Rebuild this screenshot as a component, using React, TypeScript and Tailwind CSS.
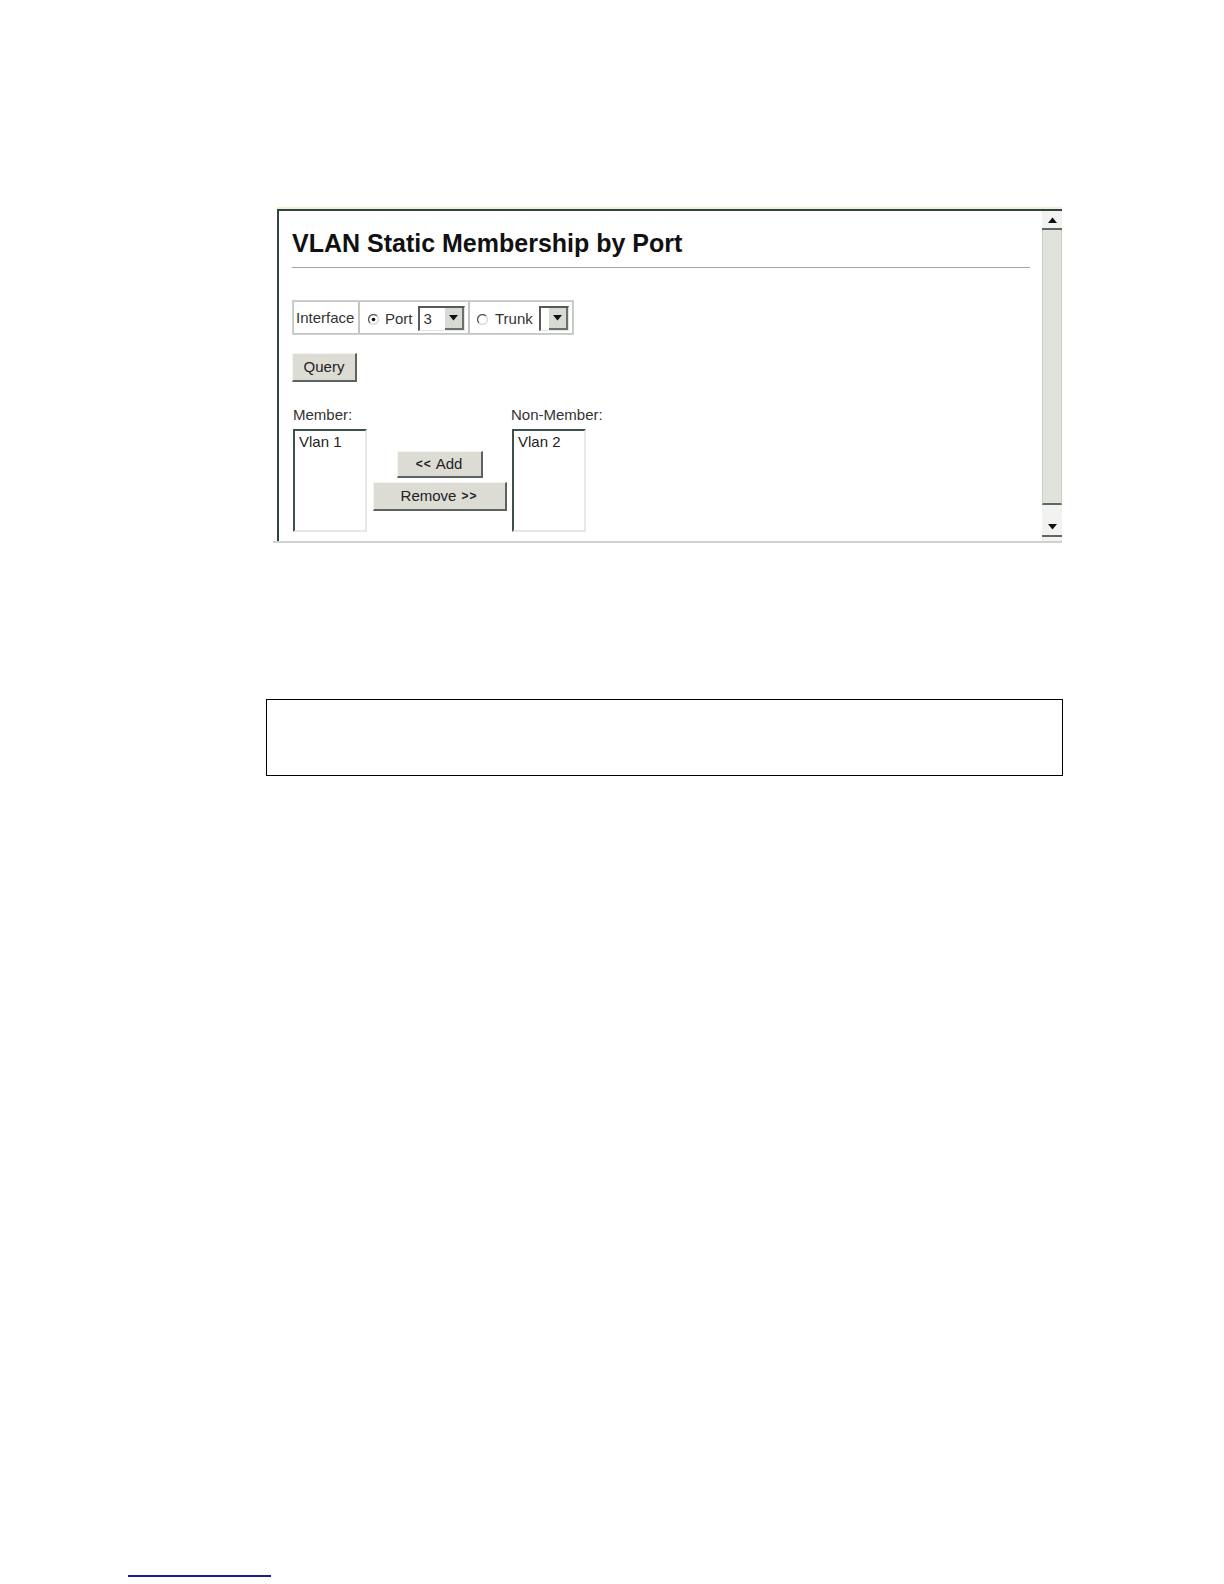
const ArrowBtn = ({ dir = 'down' }: { dir?: 'up' | 'down' }) => (
  <div className="flex h-full w-full items-center justify-center">
    <svg width="9" height="6" viewBox="0 0 9 6">
      {dir === 'down' ? (
        <polygon points="0,0 9,0 4.5,5.5" fill="#111" />
      ) : (
        <polygon points="0,6 9,6 4.5,0.5" fill="#111" />
      )}
    </svg>
  </div>
)

const Radio = ({ checked }: { checked?: boolean }) => (
  <svg width="11" height="11" viewBox="0 0 11 11" className="mt-[3px] shrink-0">
    <path d="M9 2 A4.5 4.5 0 0 0 2 9" stroke="#555" strokeWidth="1.3" fill="none" />
    <path d="M2 9 A4.5 4.5 0 0 0 9 2" stroke="#d8d8d8" strokeWidth="1.3" fill="none" />
    {checked && <circle cx="5.5" cy="5.5" r="1.8" fill="#111" />}
  </svg>
)

const Select = ({ value, width }: { value?: string; width: string }) => (
  <div
    className={`flex h-[25px] ${width} items-stretch border-l-2 border-t-2 border-[#555a58] border-r border-b border-r-[#e4e4e4] border-b-[#e4e4e4] bg-white`}
  >
    <span className="flex-1 pl-[4px] leading-[21px] text-[15px] text-[#333]">{value}</span>
    <div className="w-[19px] border-r-2 border-b-2 border-[#6a6f6c] bg-[#d8dad4]">
      <ArrowBtn />
    </div>
  </div>
)

const Btn = ({ children, className }: { children: React.ReactNode; className: string }) => (
  <div
    className={`flex items-center justify-center border-l border-t border-[#f4f4f0] border-r-2 border-b-2 border-r-[#5c625f] border-b-[#5c625f] bg-[#dcdcd4] text-[15px] text-[#222] ${className}`}
  >
    {children}
  </div>
)

const ListBox = ({ item }: { item: string }) => (
  <div className="h-[103px] w-[74px] border-l-2 border-t-2 border-[#3d504c] border-r-2 border-b-2 border-r-[#e6e8e6] border-b-[#e6e8e6] bg-white pl-[4px] pt-[2px] text-[15px] leading-[18px] text-[#222]">
    {item}
  </div>
)

export default function App() {
  return (
    <div className="flex h-[1584px] w-[1224px] flex-col overflow-hidden bg-white font-['Liberation_Sans',Arial,sans-serif]">
      {/* screenshot frame */}
      <div className="ml-[277px] mt-[207px] flex w-[785px] flex-col">
        <div className="h-[2px] w-full bg-[#eef2d2]" />
        <div className="flex h-[332px] border-l-2 border-t-2 border-[#2f4442]">
          <div className="flex flex-1 flex-col pl-[13px] pr-[10px] pt-[20px]">
            <h1 className="text-[25px] font-bold leading-[24px] text-[#111]">
              VLAN Static Membership by Port
            </h1>
            <div className="mt-[12px] h-[1px] w-[738px] bg-[#9ea5a2]" />

            <div className="mt-[32px] flex h-[35px] w-fit border border-[#cfd1cf] text-[15px] text-[#333]">
              <div className="flex w-[66px] items-center border border-[#c4c6c4] pl-[2px] pt-[1px]">Interface</div>
              <div className="flex w-[110px] items-center border border-[#c4c6c4] pl-[8px]">
                <Radio checked />
                <span className="ml-[6px] pt-[4px]">Port</span>
                <div className="ml-[5px] pt-[1px]">
                  <Select value="3" width="w-[47px]" />
                </div>
              </div>
              <div className="flex w-[104px] items-center border border-[#c4c6c4] pl-[7px]">
                <Radio />
                <span className="ml-[7px] pt-[4px]">Trunk</span>
                <div className="ml-[6px] pt-[1px]">
                  <Select width="w-[30px]" />
                </div>
              </div>
            </div>

            <Btn className="mt-[18px] h-[29px] w-[65px]">Query</Btn>

            <div className="mt-[24px] flex">
              <div className="flex flex-col">
                <span className="pl-[1px] text-[15px] leading-[18px] text-[#333]">Member:</span>
                <div className="ml-[1px] mt-[5px]">
                  <ListBox item="Vlan 1" />
                </div>
              </div>
              <div className="flex w-[145px] flex-col items-center pt-[45px]">
                <Btn className="h-[27px] w-[86px]">
                  <span className="mr-[4px] text-[12px] font-bold tracking-[1px]">&lt;&lt;</span>Add
                </Btn>
                <Btn className="mt-[4px] h-[29px] w-[134px]">
                  Remove<span className="ml-[5px] text-[12px] font-bold tracking-[1px]">&gt;&gt;</span>
                </Btn>
              </div>
              <div className="flex flex-col">
                <span className="-ml-[1px] text-[15px] leading-[18px] text-[#333]">Non-Member:</span>
                <div className="mt-[5px]">
                  <ListBox item="Vlan 2" />
                </div>
              </div>
            </div>
          </div>

          {/* scrollbar */}
          <div className="flex w-[20px] flex-col bg-[#f2f3f0] pb-[4px]">
            <div className="h-[19px] border-b-2 border-[#5f6663]">
              <ArrowBtn dir="up" />
            </div>
            <div className="h-[275px] border-x border-b-2 border-[#c9ccc8] border-b-[#5f6663] bg-[#e0e2dc]" />
            <div className="flex-1" />
            <div className="h-[19px] border-b-2 border-[#5f6663]">
              <ArrowBtn />
            </div>
          </div>
        </div>
        <div className="-ml-[4px] h-[2px] w-[789px] bg-[#cfd3cf]" />
      </div>

      {/* empty bordered box */}
      <div className="ml-[266px] mt-[156px] h-[77px] w-[797px] border border-black" />

      {/* footer rule */}
      <div className="ml-[128px] mt-[799px] h-[2px] w-[143px] shrink-0 bg-[#1c1c8c]" />
    </div>
  )
}
